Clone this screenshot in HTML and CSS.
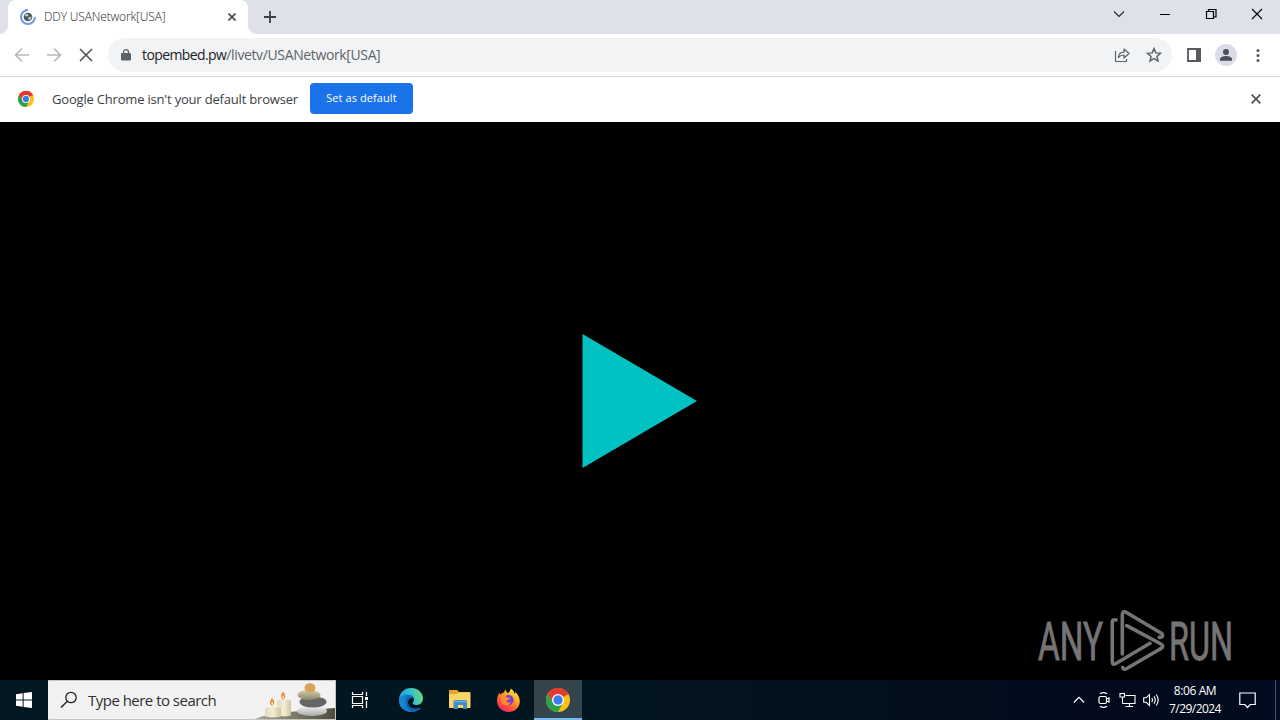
FILE: index.html
```html
<!DOCTYPE html>
<html lang="en">
<head>
  <meta charset="UTF-8">
  <meta name="viewport" content="width=device-width, initial-scale=1">
  <title>DDY USANetwork[USA]</title>
  <link rel="stylesheet" href="styles.css">
</head>
<body>

  <svg width="0" height="0" class="defs">
    <symbol id="chrome" viewBox="0 0 24 24">
      <circle cx="12" cy="12" r="12" fill="#fbc116"/>
      <path d="M12 12L1.6 6A12 12 0 0 1 22.4 6Z" fill="#e33b2e"/>
      <path d="M12 6.4h10.6A12 12 0 0 0 1.6 6l5.3 9Z" fill="#e33b2e"/>
      <path d="M1.6 6A12 12 0 0 0 12 24l5-9-5 2-5-2.2Z" fill="#2ba24c"/>
      <circle cx="12" cy="12" r="6" fill="#fff"/>
      <circle cx="12" cy="12" r="4.7" fill="#3b7ded"/>
    </symbol>
  </svg>

  <!-- Tab strip -->
  <div class="tabstrip">
    <div class="tab">
      <svg class="favicon" width="16" height="16" viewBox="0 0 16 16">
        <path d="M8 1A7 7 0 1 0 15 8" fill="none" stroke="#6f9ae0" stroke-width="2"/>
        <circle cx="8" cy="8" r="4.300" fill="#4a5560"/>
        <path d="M4.800 7c.8-2.400 3-2.200 3.600-1.200s-.6 2.200-3.600 1.200zM8 8.500l3.300-1c.5 2-.8 3.400-2.500 3.900z" fill="#b9d0c8"/>
      </svg>
      <span class="tab-title">DDY USANetwork[USA]</span>
      <svg class="tab-close" width="8" height="8" viewBox="0 0 8 8"><path d="M.5.5l7 7M7.500.5l-7 7" stroke="#45494d" stroke-width="1.600"/></svg>
    </div>
    <svg class="new-tab" width="12" height="12" viewBox="0 0 12 12"><path d="M6 0v12M0 6h12" stroke="#3c4043" stroke-width="1.800"/></svg>
    <div class="window-buttons">
      <svg width="46" height="28" viewBox="0 0 46 28"><path d="M18 11.500l5 5 5-5" fill="none" stroke="#222" stroke-width="1.100"/></svg>
      <svg width="46" height="28" viewBox="0 0 46 28"><path d="M18 14.500h10" stroke="#000"/></svg>
      <svg width="46" height="28" viewBox="0 0 46 28"><path d="M18.500 11.500h7v7h-7zM20.500 11.500v-2h7.500v7.500h-2.500" fill="none" stroke="#000" stroke-width="1.200"/></svg>
      <svg width="46" height="28" viewBox="0 0 46 28"><path d="M18 9l10 10M28 9l-10 10" stroke="#000" stroke-width="1.100"/></svg>
    </div>
  </div>

  <!-- Toolbar -->
  <div class="toolbar">
    <svg class="nav" width="32" height="32" viewBox="0 0 32 32"><path d="M23 16H10M16 9.500L9.500 16l6.500 6.500" fill="none" stroke="#b6b9bc" stroke-width="1.700"/></svg>
    <svg class="nav" width="32" height="32" viewBox="0 0 32 32"><path d="M9 16h13M16 9.500l6.500 6.500-6.500 6.500" fill="none" stroke="#b6b9bc" stroke-width="1.700"/></svg>
    <svg class="nav" width="32" height="32" viewBox="0 0 32 32"><path d="M10 10l12 12M22 10L10 22" stroke="#505458" stroke-width="1.600"/></svg>
    <div class="omnibox">
      <svg class="lock" width="10" height="12" viewBox="0 0 10 12"><rect x="0" y="4" width="10" height="7.500" rx="1" fill="#5f6368"/><path d="M2.500 5V3a2.500 2.300 0 0 1 5 0v2" fill="none" stroke="#5f6368" stroke-width="1.300"/></svg>
      <span class="url"><span class="host">topembed.pw</span>/livetv/USANetwork[USA]</span>
      <svg class="share" width="16" height="16" viewBox="0 0 16 16"><path d="M1.500 4v10.500h11V12" fill="none" stroke="#5f6368" stroke-width="1.200"/><path d="M4.500 10.500c.2-3.500 2-5.300 5.500-5.400V2l5 4.500-5 4.500V8c-2.600 0-4.200.8-5.500 2.500z" fill="none" stroke="#5f6368" stroke-width="1.200" stroke-linejoin="round"/></svg>
      <svg class="star" width="16" height="16" viewBox="0 0 16 16"><path d="M8 1.600l1.800 4.300 4.700.4-3.600 3.100 1.100 4.500-4-2.400-4 2.400 1.100-4.500-3.600-3.100 4.700-.4z" fill="none" stroke="#5f6368" stroke-width="1.500"/></svg>
    </div>
    <svg class="panel" width="14" height="14" viewBox="0 0 14 14"><path d="M1 1h12v12H1z" fill="none" stroke="#565a5f" stroke-width="1.800"/><path d="M9 0h5v14H9z" fill="#565a5f"/></svg>
    <svg class="avatar" width="22" height="22" viewBox="0 0 22 22"><circle cx="11" cy="11" r="11" fill="#dadde6"/><circle cx="11" cy="7.900" r="3" fill="#4a4f5c"/><path d="M5 16.800v-1.700c0-2 3.500-3 6-3s6 1 6 3v1.700z" fill="#4a4f5c"/></svg>
    <svg class="dots" width="4" height="14" viewBox="0 0 4 14"><circle cx="2" cy="2.500" r="1.500" fill="#55595e"/><circle cx="2" cy="7.500" r="1.500" fill="#55595e"/><circle cx="2" cy="12.500" r="1.500" fill="#55595e"/></svg>
  </div>

  <!-- Default browser bar -->
  <div class="infobar">
    <svg class="info-logo" width="16" height="16"><use href="#chrome"/></svg>
    <span class="info-text">Google Chrome isn't your default browser</span>
    <button class="default-btn">Set as default</button>
    <svg class="info-close" width="10" height="10" viewBox="0 0 10 10"><path d="M.7.700l8.600 8.600M9.300.7L.7 9.300" stroke="#505458" stroke-width="1.800"/></svg>
  </div>

  <!-- Page -->
  <div class="player">
    <svg class="play" width="116" height="136" viewBox="0 0 116 136"><path d="M.5 1L115 68 .5 135z" fill="#00c2c2"/></svg>
    <svg class="watermark" width="200" height="66" viewBox="0 0 200 66">
      <text x="0" y="53" textLength="65" lengthAdjust="spacingAndGlyphs">ANY</text>
      <g fill="none" stroke="#757575" stroke-width="3.600" stroke-linejoin="round" stroke-linecap="round">
        <path d="M84.300 47V8q0-4.500 3.700-2.800l35 20.800q3 2.300.6 4-1 .6-2.300.2"/>
        <path d="M78 13q-3.700-1.200-3.700 2.500v39q0 4 3.200 2.200L112 36.300"/>
        <path d="M84.700 60.500q.8 2.700 3.600 1.200L123 41.500q3.500-2.500 0-4.500L88.700 18.700"/>
      </g>
      <text x="131" y="53" textLength="64" lengthAdjust="spacingAndGlyphs">RUN</text>
    </svg>
  </div>

  <!-- Taskbar -->
  <div class="taskbar">
    <div class="start">
      <svg width="16" height="16" viewBox="0 0 16 16"><path d="M0 2.200L6.600 1.300V7.500H0zM7.600 1.100L16 0v7.500H7.600zM0 8.500h6.600v6.200L0 13.800zM7.600 8.500H16V16l-8.400-1.100z" fill="#fff"/></svg>
    </div>
    <div class="search">
      <svg class="glass" width="18" height="18" viewBox="0 0 18 18"><circle cx="11" cy="6.500" r="5.200" fill="none" stroke="#222" stroke-width="1.300"/><path d="M7.300 10.300L1 16.500" stroke="#222" stroke-width="1.400"/></svg>
      <span class="search-text">Type here to search</span>
      <svg class="stones" width="80" height="38" viewBox="0 0 80 38">
        <defs>
          <linearGradient id="wax" x1="0" x2="1"><stop offset="0" stop-color="#e3d8b8"/><stop offset=".5" stop-color="#f4ecd4"/><stop offset="1" stop-color="#cfc3a2"/></linearGradient>
          <linearGradient id="ground" x1="0" x2="1"><stop offset="0" stop-color="#a9a593"/><stop offset="1" stop-color="#4e4c3c"/></linearGradient>
          <linearGradient id="sand" x1="0" x2="0" y1="0" y2="1"><stop offset="0" stop-color="#d5ccb0"/><stop offset="1" stop-color="#8f8566"/></linearGradient>
          <linearGradient id="pale" x1="0" x2="0" y1="0" y2="1"><stop offset="0" stop-color="#f1f1f1"/><stop offset="1" stop-color="#aaaaac"/></linearGradient>
        </defs>
        <path d="M0 38q14-6 34-7l46-4v11z" fill="url(#ground)"/>
        <path d="M10 27q7.500-2 16 0v8.500q-8 2-16 0z" fill="url(#wax)"/>
        <path d="M22 19.500q7-2 14 0v15q-5 1.500-10 .5v-8l-4-1z" fill="url(#wax)"/>
        <path d="M17 17q4.500 4.500 0 8-4-3 0-8zM28 10.500q4.500 5 0 8.500-4-3 0-8.500z" fill="#e88a32"/>
        <path d="M17 20q2 2.500 0 4.500-1.500-2 0-4.500zM28 14q2 2.500 0 4.500-1.500-2 0-4.500z" fill="#fff0b5"/>
        <ellipse cx="57" cy="30" rx="15" ry="5" fill="url(#pale)"/>
        <ellipse cx="58" cy="21" rx="13.500" ry="5.500" fill="#64666a"/>
        <ellipse cx="54" cy="14" rx="11.500" ry="5" fill="url(#sand)"/>
        <ellipse cx="55" cy="7" rx="5.500" ry="4.800" fill="#d7a45a"/>
      </svg>
    </div>
    <div class="app">
      <svg width="18" height="18" viewBox="0 0 18 18"><path d="M1.500 1v2.500h10V1M1.500 17v-2.500h10V17M1.500 5.500h10v7h-10zM15.500 1v4M15.500 10v7" fill="none" stroke="#fff" stroke-width="1.200"/><path d="M14 6h3v3h-3z" fill="#fff"/></svg>
    </div>
    <div class="app edge">
      <svg width="24" height="24" viewBox="0 0 24 24">
        <defs>
          <linearGradient id="edgeTop" x1="0" x2="1" y1=".5" y2=".3"><stop offset="0" stop-color="#269ee0"/><stop offset=".5" stop-color="#32bdd4"/><stop offset="1" stop-color="#6ee071"/></linearGradient>
          <linearGradient id="edgeLow" x1="0" x2="1"><stop offset="0" stop-color="#1a8edb"/><stop offset="1" stop-color="#0c59a4"/></linearGradient>
        </defs>
        <path d="M0 11.500C.5 4.500 5.500 0 12 0c7 0 12 5 12 10.500 0 4-3 6.500-6.500 6.500-3 0-4.500-1.200-3.500-2.500 2.500-4-.5-7.500-5-7.500-4 0-7.500 1.500-9 4.500z" fill="url(#edgeTop)"/>
        <path d="M0 12c.5-3.500 4.500-6 8.500-5.500 3 .3 5 2 5.500 4-2-1.500-5 0-5 4 0 4 4 7 8.500 6.500 2 0 3.500-.8 4.500-1.500C20 22.500 16.500 24 12.500 24 5 24-.5 18.500 0 12z" fill="url(#edgeLow)"/>
        <path d="M8 8.500c-3 6 .5 13.500 6.500 15.200C19 23 21 21 22.500 19c-6 3.200-13 .8-13.500-4-.2-2.200.8-4 2.300-4.700-.8-1-2-1.500-3.300-1.800z" fill="#125ea8"/>
      </svg>
    </div>
    <div class="app">
      <svg width="22" height="20" viewBox="0 0 22 20"><path d="M0 0h8l2 2h11v5H0z" fill="#e5a32a"/><path d="M0 4h8l2-1.500h11.500V18H0z" fill="#fbd667"/><path d="M4.500 19v-7.500q0-1.500 1.500-1.500h10.500q1.500 0 1.500 1.500V19h-4v-4H9v4z" fill="#3e8fc8"/><path d="M5 11.500h12.500" stroke="#72b8e6"/></svg>
    </div>
    <div class="app firefox">
      <svg width="23" height="24" viewBox="0 0 23 24">
        <defs><linearGradient id="fox" x1=".85" y1="0" x2=".2" y2="1"><stop offset="0" stop-color="#fff04a"/><stop offset=".35" stop-color="#ffae27"/><stop offset=".7" stop-color="#ff5138"/><stop offset="1" stop-color="#e8217b"/></linearGradient></defs>
        <path d="M14 .5c2 1.500 3 3 3.300 5 .8 0 1-.6 1-1.500 3 2.500 4.700 6 4.500 10-.5 6-5.500 10-11.300 10C5 24 0 19 0 12.800 0 9.500.8 7 2.700 4.500c0 1 .1 1.700.5 2.300 1-1.300 2.200-2 3.800-2.300.3-.8.8-2 2-3 0 1.500.4 2.700 1.500 3.500C12.500 5 13 2.500 14 .5z" fill="url(#fox)"/>
        <circle cx="11.700" cy="12" r="5" fill="#7541d8"/>
        <path d="M3.500 8.500c3-2 5.500-.8 6.500 1 1.800 0 3 .3 3 1-.3 1.500-3 1.300-3.500 2.500.3 1.500 3 2 4.500 1-1 3-4.500 4-7.500 2.500-2.500-1.500-3.500-4.500-3-8z" fill="#ff8a2a"/>
      </svg>
    </div>
    <div class="app active">
      <svg width="24" height="24"><use href="#chrome"/></svg>
    </div>
    <div class="tray">
      <svg width="12" height="8" viewBox="0 0 12 8"><path d="M.8 6.500L6 1.300l5.200 5.200" fill="none" stroke="#fff" stroke-width="1.200"/></svg>
      <svg class="camera" width="12" height="18" viewBox="0 0 12 18"><path d="M2 2.800q3.500-2.500 7 0M2 15.200q3.500 2.500 7 0M2.500 5.500H7q1.500 0 1.500 1.500v4q0 1.500-1.500 1.500H2.500Q1 12.500 1 11V7q0-1.500 1.500-1.500zM8.500 8L11 7v4l-2.500-1" fill="none" stroke="#fff" stroke-width="1.200"/></svg>
      <svg class="network" width="17" height="16" viewBox="0 0 17 16"><path d="M6.500 3.500H16v8H3.500M10.500 11.500v3M6.500 14.500h7.500M1 1.500h4.500V5H1zM3.500 5v6.500" fill="none" stroke="#fff" stroke-width="1.100"/></svg>
      <svg class="volume" width="17" height="14" viewBox="0 0 17 14"><path d="M.7 4.800h2.500L6.500 1.500v11L3.200 9.300H.7zM8.800 5q1.300 2 0 4M11 3.300q2.500 3.700 0 7.400M13.200 1.500q4 5.500 0 11" fill="none" stroke="#fff" stroke-width="1.100"/></svg>
      <div class="clock">
        <span class="time">8:06 AM</span>
        <span class="date">7/29/2024</span>
      </div>
      <svg class="notes" width="17" height="17" viewBox="0 0 17 17"><path d="M.8 1h15.400v11.500h-5L8.500 15.500l-2.700-3h-5z" fill="none" stroke="#fff" stroke-width="1.200"/></svg>
      <div class="show-desktop"></div>
    </div>
  </div>

</body>
</html>
```
FILE: styles.css
```css
* { margin: 0; padding: 0; box-sizing: border-box; }
body {
  width: 1280px;
  height: 720px;
  overflow: hidden;
  display: flex;
  flex-direction: column;
  font-family: 'Open Sans', 'Noto Sans', sans-serif;
  background: #000;
}
svg {
  display: block;
  flex: none;
}
span {
  white-space: nowrap;
}
.defs {
  position: absolute;
}

/* Tab strip */
.tabstrip {
  height: 34px;
  flex: none;
  display: flex;
  background: #dee1e9;
  padding-left: 8px;
}
.tab {
  position: relative;
  width: 240px;
  height: 34px;
  display: flex;
  align-items: center;
  padding-left: 12px;
  background: #fff;
  border-radius: 8px 8px 0 0;
}
.tab::before, .tab::after {
  content: "";
  position: absolute;
  bottom: 0;
  width: 8px;
  height: 8px;
}
.tab::before {
  left: -8px;
  background: radial-gradient(circle at 0 0, transparent 7.5px, #fff 8px);
}
.tab::after {
  right: -8px;
  background: radial-gradient(circle at 100% 0, transparent 7.5px, #fff 8px);
}
.tab-title {
  margin-left: 8px;
  width: 184px;
  padding-bottom: 1px;
  font-size: 12px;
  font-weight: 300;
  letter-spacing: -0.15px;
  color: #202124;
}
.new-tab {
  margin: 11px 0 0 16px;
}
.window-buttons {
  display: flex;
  margin-left: auto;
}

/* Toolbar */
.toolbar {
  height: 43px;
  flex: none;
  display: flex;
  align-items: center;
  padding: 0 20px 0 6px;
  background: #fff;
  border-bottom: 1px solid #d5d7da;
}
.omnibox {
  width: 1064px;
  height: 34px;
  margin-left: 6px;
  padding: 0 10px 0 13px;
  display: flex;
  align-items: center;
  border-radius: 17px;
  background: #f1f3f4;
}
.url {
  margin-left: 11px;
  padding-bottom: 1px;
  font-size: 14px;
  letter-spacing: -0.37px;
  color: #5f6368;
}
.host {
  letter-spacing: -0.6px;
  color: #202124;
}
.share {
  margin-left: auto;
}
.star {
  margin-left: 16px;
}
.panel {
  margin-left: 15px;
}
.avatar {
  margin-left: 14px;
}
.dots {
  margin-left: auto;
}

/* Default browser bar */
.infobar {
  height: 45px;
  flex: none;
  display: flex;
  align-items: center;
  padding: 0 19px 2px 18px;
  background: #fff;
}
.info-text {
  width: 246px;
  margin-left: 18px;
  font-size: 13px;
  letter-spacing: -0.19px;
  color: #3c4043;
}
.default-btn {
  width: 103px;
  height: 31px;
  margin-left: 12px;
  padding-bottom: 2px;
  border: none;
  border-radius: 4px;
  background: #1a73e8;
  color: #fff;
  font-family: inherit;
  font-size: 11px;
  letter-spacing: 0.08px;
}
.info-close {
  margin-left: auto;
}

/* Page */
.player {
  position: relative;
  height: 558px;
  flex: none;
  display: flex;
  align-items: center;
  justify-content: center;
  background: #000;
}
.watermark {
  position: absolute;
  right: 42px;
  bottom: 7px;
}
.watermark text {
  font-family: Roboto, sans-serif;
  font-size: 53px;
  fill: #757575;
  stroke: #757575;
  stroke-width: 0.9px;
}

/* Taskbar */
.taskbar {
  height: 40px;
  flex: none;
  display: flex;
  background: linear-gradient(to right, #02171f, #03151f 50%, #020a1b 85%, #030b20);
}
.start {
  width: 48px;
  display: flex;
  align-items: center;
  justify-content: center;
}
.search {
  width: 288px;
  display: flex;
  align-items: center;
  padding-left: 11px;
  background: #f2f2f2;
  border: 1px solid #c4c4c4;
  border-left-color: #f2f2f2;
}
.search-text {
  margin-left: 10px;
  font-size: 15px;
  letter-spacing: -0.52px;
  color: #303030;
}
.stones {
  margin-left: auto;
  width: 80px;
}
.app {
  width: 48px;
  margin-right: 1px;
  display: flex;
  align-items: center;
  justify-content: center;
}
.edge {
  margin-left: 2px;
}
.firefox {
  padding-right: 1px;
}
.active {
  padding-top: 2px;
  background: #35454d;
  border-bottom: 2px solid #76b9ed;
}
.tray {
  margin-left: auto;
  display: flex;
  align-items: center;
  color: #fff;
}
.camera {
  margin-left: 13px;
}
.network {
  margin-left: 9px;
}
.volume {
  margin-left: 7px;
}
.clock {
  width: 70px;
  display: flex;
  flex-direction: column;
  align-items: center;
  font-size: 12px;
  line-height: 18px;
}
.time, .date {
  letter-spacing: -0.4px;
}
.date {
  letter-spacing: -0.55px;
}
.notes {
  margin-left: 9px;
}
.show-desktop {
  width: 5px;
  height: 40px;
  margin-left: 19px;
  border-left: 1px solid #4b5362;
}
```
